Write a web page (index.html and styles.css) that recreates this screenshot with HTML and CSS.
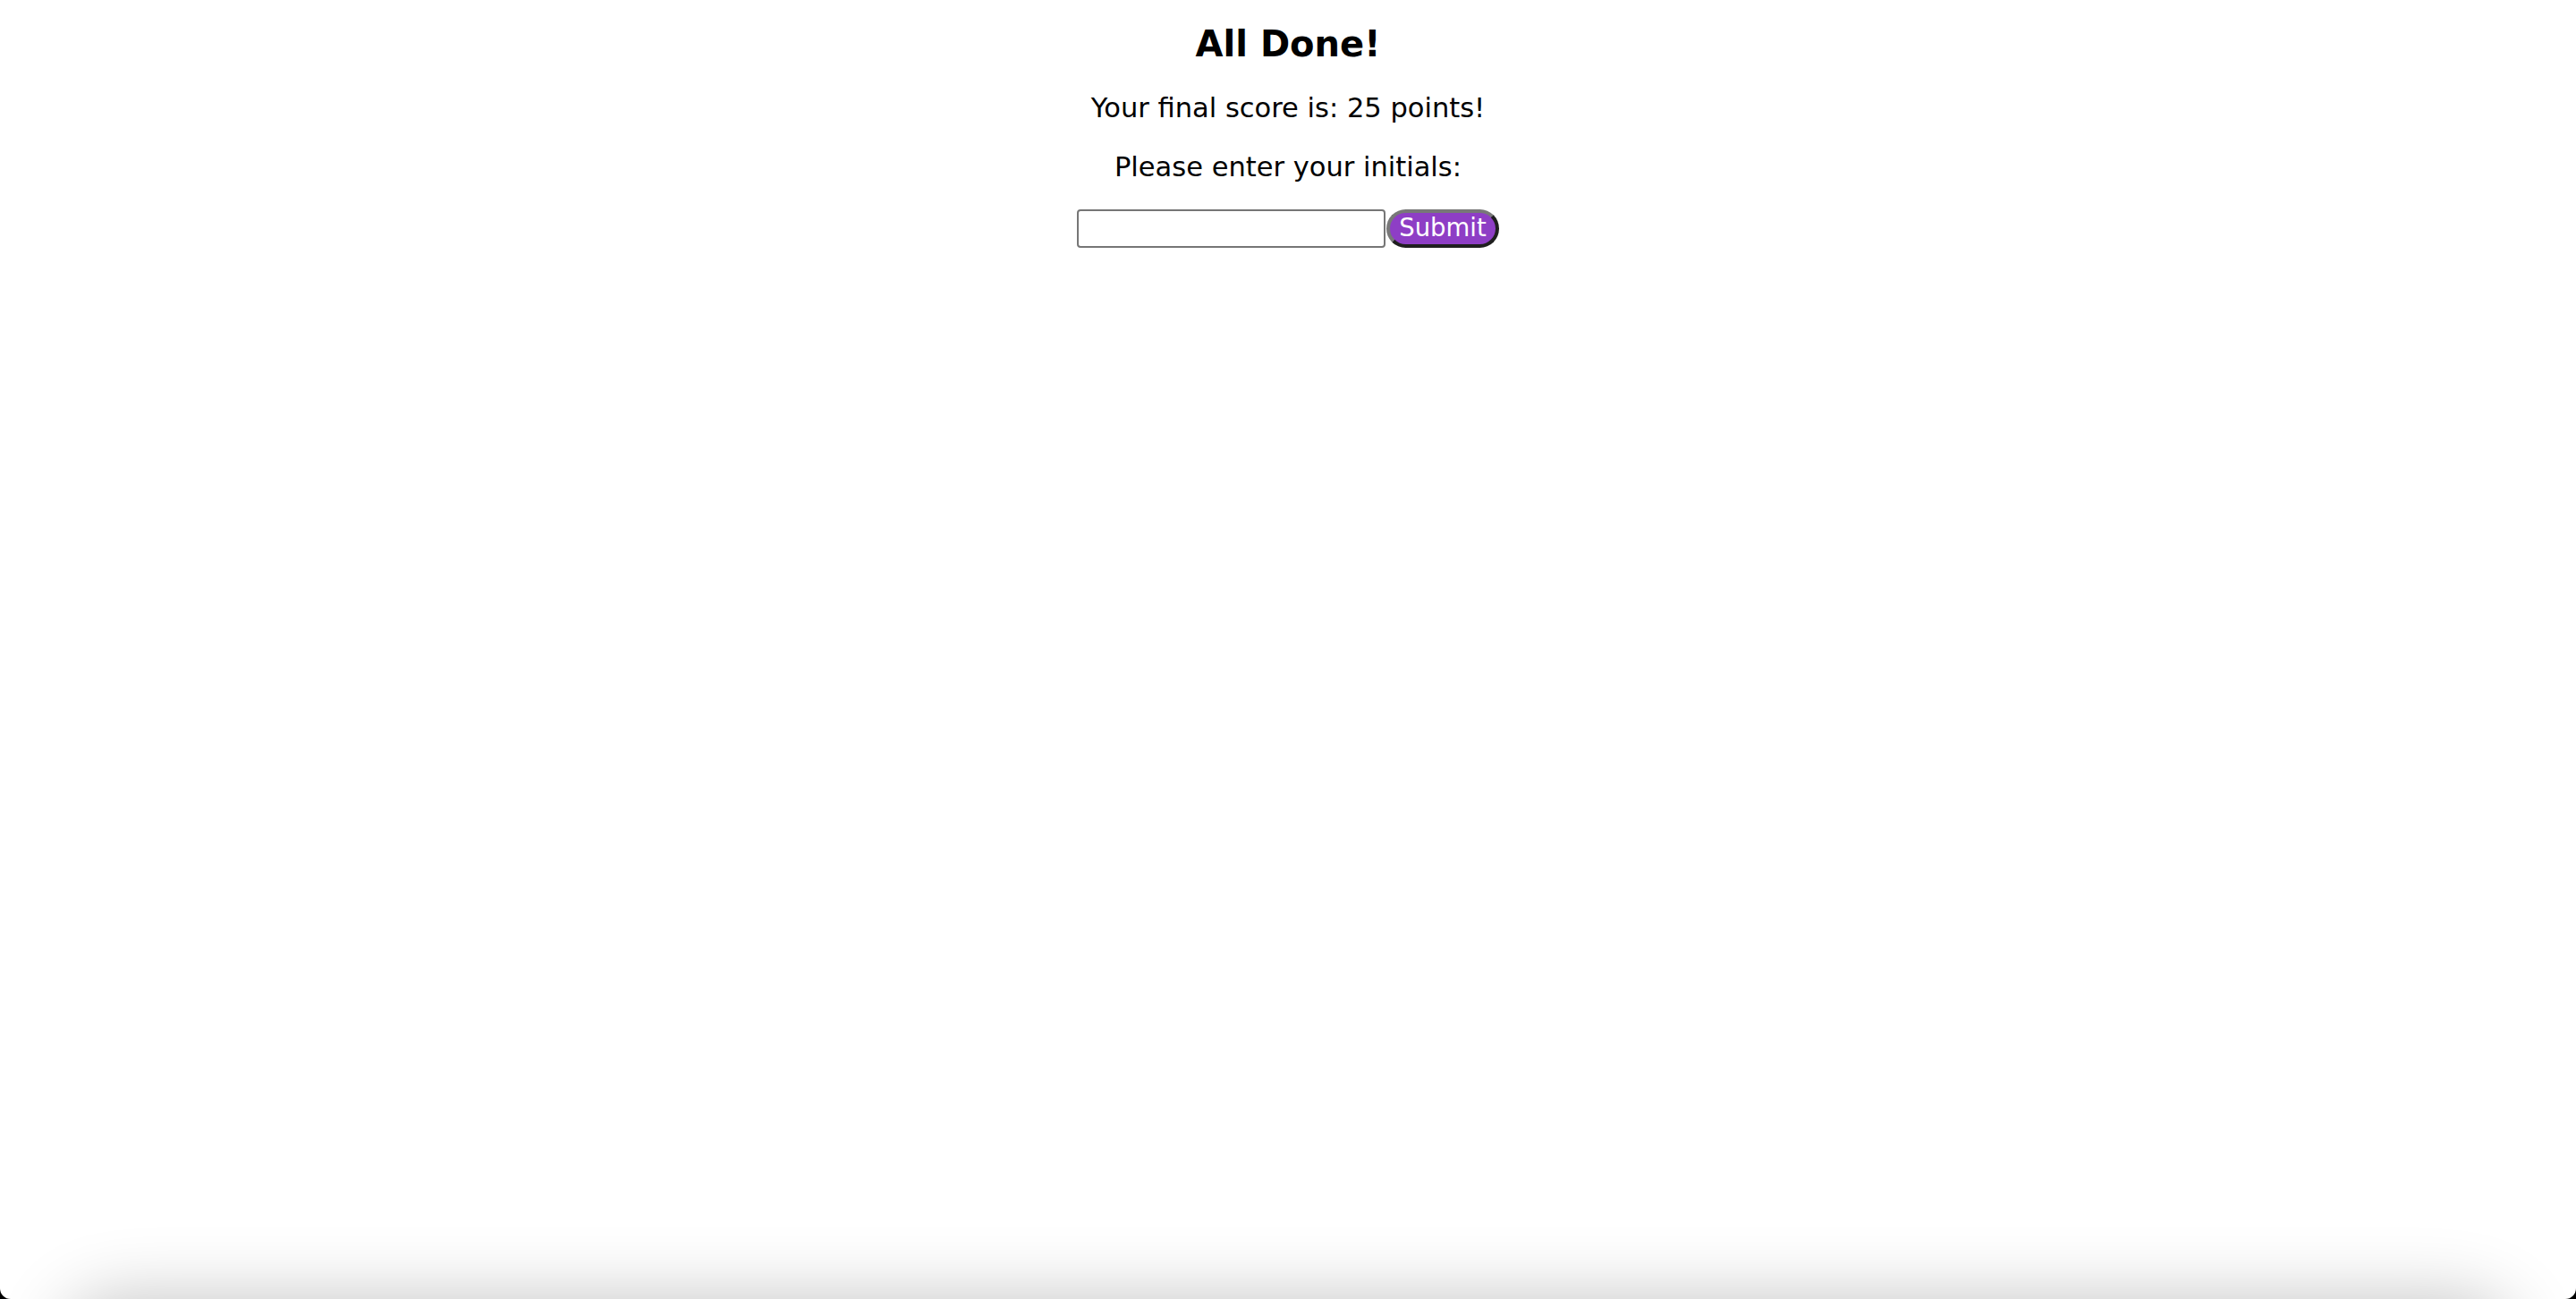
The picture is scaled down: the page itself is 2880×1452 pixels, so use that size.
FILE: index.html
```html
<!DOCTYPE html>
<html lang="en">
<head>
<meta charset="utf-8">
<title>All Done!</title>
<link rel="stylesheet" href="styles.css">
</head>
<body>
<main class="done">
  <h1 class="title">All Done!</h1>
  <p class="line score">Your final score is: 25 points!</p>
  <p class="line prompt">Please enter your initials:</p>
  <form class="entry">
    <input class="initials" type="text" aria-label="Initials">
    <button class="submit" type="button">Submit</button>
  </form>
</main>
<div class="shade"></div>
<div class="frame"></div>
</body>
</html>
```

FILE: styles.css
```css
html, body {
  margin: 0;
  padding: 0;
  background: #fff;
  height: 100%;
  overflow: hidden;
}

body {
  font-family: "DejaVu Sans", Verdana, sans-serif;
  color: #000;
}

.done {
  display: flex;
  flex-direction: column;
  align-items: center;
  padding-top: 27px;
}

.title {
  margin: 0;
  font-size: 40px;
  line-height: 45px;
  font-weight: bold;
}

.line {
  margin: 0;
  font-size: 30.5px;
  line-height: 36px;
}

.score {
  margin-top: 31px;
}

.prompt {
  margin-top: 30px;
}

.entry {
  margin: 29px 0 0;
  display: flex;
  align-items: stretch;
}

.initials {
  box-sizing: border-box;
  width: 345px;
  height: 43px;
  margin: 0 1px 0 0;
  padding: 2px 6px;
  border: 2px solid #767676;
  border-radius: 4px;
  background: #fff;
  font-family: "DejaVu Sans", sans-serif;
  font-size: 26px;
  outline: none;
}

.submit {
  box-sizing: border-box;
  width: 126px;
  height: 43px;
  margin: 0;
  padding: 0 0 2px;
  border: 4px solid;
  border-color: #787878 #1f1f1f #1f1f1f #787878;
  border-radius: 22px;
  background: #8e3ec5;
  color: #fff;
  font-family: "DejaVu Sans", sans-serif;
  font-size: 27.5px;
  line-height: 1;
}

.shade {
  position: fixed;
  left: 70px;
  right: 70px;
  top: 100%;
  height: 120px;
  border-radius: 60px;
  box-shadow: 0 0 80px rgba(0, 0, 0, 0.24);
  pointer-events: none;
}

.frame {
  position: fixed;
  inset: 0;
  border-radius: 0 0 12px 12px;
  box-shadow: 0 0 0 40px #000;
  pointer-events: none;
}
```
